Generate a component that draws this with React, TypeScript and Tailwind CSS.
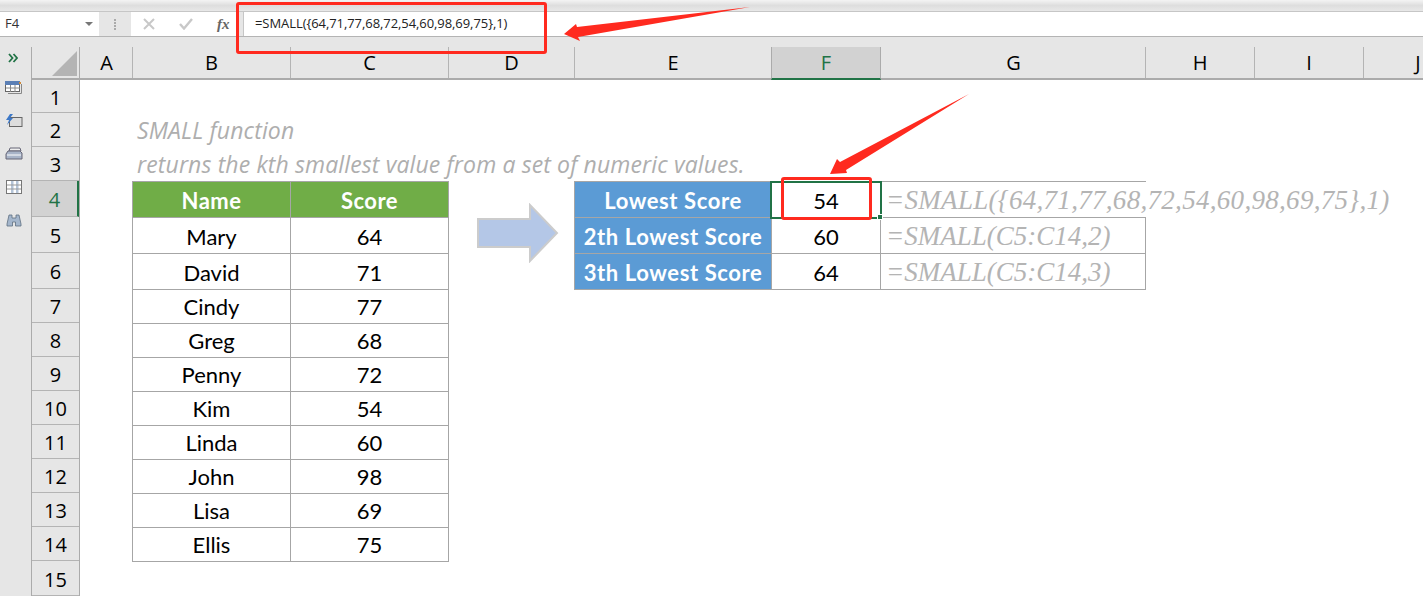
const font = "font-['Lato','Liberation_Sans',sans-serif]";

function SideIcon({ children }: { children: React.ReactNode }) {
  return <div className="w-[24px] h-[24px] flex items-center justify-center">{children}</div>;
}

const columns: [string, number][] = [
  ["A", 52], ["B", 158], ["C", 158], ["D", 126], ["E", 197], ["F", 110], ["G", 264], ["H", 109], ["I", 109], ["J", 109],
];
const rowHeights = [33, 34, 34, 36, 36, 36, 34, 34, 34, 34, 34, 34, 34, 34, 35];
const people: [string, string][] = [
  ["Mary", "64"], ["David", "71"], ["Cindy", "77"], ["Greg", "68"], ["Penny", "72"],
  ["Kim", "54"], ["Linda", "60"], ["John", "98"], ["Lisa", "69"], ["Ellis", "75"],
];
const results: [string, string, string, string][] = [
  ["Lowest Score", "54", "=SMALL({64,71,77,68,72,54,60,98,69,75},1)", "tracking-[0.3px]"],
  ["2th Lowest Score", "60", "=SMALL(C5:C14,2)", "border-r"],
  ["3th Lowest Score", "64", "=SMALL(C5:C14,3)", "border-r"],
];

export default function App() {
  return (
    <div className={`relative w-[1423px] h-[596px] overflow-hidden bg-white ${font}`}>
      <div className="h-[12px] bg-gradient-to-b from-[#f4f4f4] via-[#dedede] to-[#e8e8e8] border-b border-[#c6c6c6]" />
      <div className="h-[25px] bg-[#e6e6e6] flex items-stretch border-b border-[#b4b4b4]">
        <div className="w-[99px] bg-white flex items-center justify-between pl-[5px] pr-[6px] text-[13px] text-[#333] font-['Open_Sans',sans-serif]">
          <span>F4</span>
          <span className="w-0 h-0 border-x-[4px] border-x-transparent border-t-[4px] border-t-[#777]" />
        </div>
        <div className="w-[32px] flex items-center justify-center">
          <div className="flex flex-col gap-[1px]">
            <span className="w-[2px] h-[2px] bg-[#aaa]" /><span className="w-[2px] h-[2px] bg-[#aaa]" /><span className="w-[2px] h-[2px] bg-[#aaa]" /><span className="w-[2px] h-[2px] bg-[#aaa]" />
          </div>
        </div>
        <div className="w-[108px] bg-white flex items-center">
          <svg width="12" height="12" viewBox="0 0 12 12" className="ml-[12px]"><path d="M1 1 L11 11 M11 1 L1 11" stroke="#c8c8c8" strokeWidth="2" /></svg>
          <svg width="14" height="12" viewBox="0 0 14 12" className="ml-[24px]"><path d="M1 6 L5 10.5 L13 1" stroke="#c8c8c8" strokeWidth="2.4" fill="none" /></svg>
          <span className="ml-[24px] text-[15px] leading-none italic font-bold text-[#666] font-['Liberation_Serif',serif]">fx</span>
        </div>
        <div className="w-[4px]" />
        <div className="flex-1 bg-white border-l border-[#c6c6c6] flex items-center pl-[11px] text-[13px] tracking-[-0.07px] text-[#222] font-['Open_Sans',sans-serif]">
          =SMALL({"{"}64,71,77,68,72,54,60,98,69,75{"}"},1)
        </div>
      </div>

      <div className="flex h-[559px]">
        <div className="w-[31px] bg-[#e6e6e6] flex flex-col items-center">
          <div className="h-[42px] pt-[16px] mr-[5px]">
            <svg width="10" height="10" viewBox="0 0 10 10"><path d="M1 1 L4.5 5 L1 9 M5.5 1 L9 5 L5.5 9" stroke="#217346" strokeWidth="1.8" fill="none" /></svg>
          </div>
          <div className="flex flex-col gap-[9px] mt-[-3px] mr-[3px]">
            <SideIcon>
              <svg width="18" height="14" viewBox="0 0 18 14"><rect x="0.5" y="0.5" width="14" height="10" fill="#fff" stroke="#666" /><rect x="0" y="0" width="15" height="4" fill="#5b7fb5" /><rect x="14" y="1" width="2" height="2" fill="#d08a3a" /><path d="M1 7h14M5.5 4v7M10 4v7" stroke="#888" /><path d="M16.5 3v9.5H3" stroke="#888" fill="none" /></svg>
            </SideIcon>
            <SideIcon>
              <svg width="18" height="14" viewBox="0 0 18 14"><rect x="4.5" y="3.5" width="12.5" height="9" fill="#ddd" stroke="#666" /><path d="M5 0 L1 6 L4 6 L2 11 L8 4 L5 4 L8 0 Z" fill="#3c78c8" /></svg>
            </SideIcon>
            <SideIcon>
              <svg width="18" height="14" viewBox="0 0 18 14"><path d="M5 1 H15 L16 4 H4 Z" fill="#eee" stroke="#667" /><path d="M3 4 H15 L17 6 V12 H1 V7 Z" fill="#a8b4c8" stroke="#667" /><path d="M2 8h14" stroke="#fff" /></svg>
            </SideIcon>
            <SideIcon>
              <svg width="16" height="14" viewBox="0 0 16 14"><rect x="0.5" y="0.5" width="15" height="13" fill="#fff" stroke="#777" /><rect x="5" y="1" width="2.5" height="12" fill="#b4c4d8" /><rect x="10" y="1" width="2.5" height="12" fill="#b4c4d8" /><path d="M1 5h14M1 9h14" stroke="#999" /></svg>
            </SideIcon>
            <SideIcon>
              <svg width="16" height="13" viewBox="0 0 16 13"><path d="M3 1 H6 V4 H10 V1 H13 L15 10 V12 H9.5 V8 H6.5 V12 H1 V10 Z" fill="#a4b6cc" stroke="#5e6e80" strokeWidth="0.8" /></svg>
            </SideIcon>
          </div>
        </div>

        <div className="flex-1 min-w-0 flex flex-col">
          <div className="relative flex h-[43px] bg-[#e6e6e6] border-b-2 border-[#ababab] shrink-0 font-['Open_Sans',sans-serif]">
            <div className="w-[49px] shrink-0 relative flex items-end justify-end pb-[2px] pr-[3px]">
              <span className="absolute left-0 bottom-0 w-px h-[31px] bg-[#ababab]" />
              <span className="absolute right-0 bottom-0 w-px h-[31px] bg-[#ababab]" />
              <div className="w-0 h-0 border-l-[25px] border-l-transparent border-b-[25px] border-b-[#b4b4b4]" />
            </div>
            {columns.map(([name, w]) => (
              <div
                key={name}
                style={{ width: w }}
                className={
                  name === "F"
                    ? "shrink-0 self-end h-[33px] mb-[-2px] bg-[#d2d2d2] border-x border-x-[#ababab] border-b-2 border-b-[#217346] flex items-center justify-center pt-[1px] text-[20px] text-[#217346]"
                    : "shrink-0 relative flex items-end justify-center pl-[1px] text-[20px] leading-[31px] text-black"
                }
              >
                {name}
                {name !== "F" && name !== "E" && name !== "J" && <span className="absolute right-[-1px] bottom-0 w-px h-[31px] bg-[#b4b4b4]" />}
              </div>
            ))}
          </div>

          <div className="flex flex-1 min-h-0">
            <div className="w-[49px] shrink-0 bg-[#e6e6e6] border-l border-r border-[#ababab] font-['Open_Sans',sans-serif]">
              {rowHeights.map((h, i) => (
                <div
                  key={i}
                  style={{ height: h }}
                  className={
                    i === 3
                      ? "bg-[#d2d2d2] border-b border-b-[#b4b4b4] border-r-2 border-r-[#217346] flex items-center justify-center pt-[3px] text-[20px] text-[#217346]"
                      : "border-b border-[#b4b4b4] flex items-center justify-center pt-[3px] text-[20px] text-black"
                  }
                >
                  {i + 1}
                </div>
              ))}
            </div>

            <div className="relative flex-1 min-w-0 pl-[52px] pt-[33px]">
              <div className="h-[34px] flex items-center text-[23px] tracking-[0.13px] italic text-[#aeaeae] whitespace-nowrap pl-[5px] pt-[1px] font-['Open_Sans',sans-serif]">SMALL function</div>
              <div className="h-[34px] flex items-center text-[23px] tracking-[0.13px] italic text-[#aeaeae] whitespace-nowrap pl-[5px] pt-[1px] font-['Open_Sans',sans-serif]">returns the kth smallest value from a set of numeric values.</div>

              <div className="flex items-start">
                <div className="w-[317px] shrink-0 border border-[#a6a6a6]">
                  <div className="flex h-[36px] bg-[#70ad47] border-b border-[#a6a6a6] text-white font-bold text-[22px] tracking-[0.5px]">
                    <div className="w-[158px] flex items-center justify-center border-r border-[#a6a6a6] pt-[2px]">Name</div>
                    <div className="flex-1 flex items-center justify-center pt-[2px]">Score</div>
                  </div>
                  {people.map(([n, s], i) => (
                    <div key={n} style={{ height: i < 2 ? 36 : i === 9 ? 33 : 34 }} className="flex border-b last:border-b-0 border-[#a6a6a6] text-[22px] text-black">
                      <div className={i < 2 ? "w-[158px] flex items-center justify-center border-r border-[#a6a6a6] pt-[2px]" : "w-[158px] flex items-center justify-center border-r border-[#a6a6a6]"}>{n}</div>
                      <div className={i < 2 ? "flex-1 flex items-center justify-center pt-[2px]" : "flex-1 flex items-center justify-center"}>{s}</div>
                    </div>
                  ))}
                </div>

                <div className="w-[125px] shrink-0 pt-[22px] pl-[28px]">
                  <svg width="84" height="60" viewBox="0 0 84 60">
                    <path d="M1 16 H53 V2 L80 30 L53 58 V44 H1 Z" fill="#b4c7e7" stroke="#cccccc" strokeWidth="2" />
                  </svg>
                </div>

                <div className="w-[572px] shrink-0 border-t border-[#a6a6a6]">
                  {results.map(([label, value, formula, extra]) => (
                    <div key={label} className="flex h-[36px] text-[22px]">
                      <div className="w-[198px] shrink-0 bg-[#5b9bd5] border-x border-b border-[#a6a6a6] flex items-center justify-center text-white font-bold tracking-[0.6px] pt-[1px]">{label}</div>
                      <div className="w-[109px] shrink-0 border-b border-r border-[#a6a6a6] flex items-center justify-center text-black pt-[1px]">{value}</div>
                      <div className={`w-[265px] shrink-0 border-b border-[#a6a6a6] flex items-center pl-[5px] pt-[1px] whitespace-nowrap text-[27px] italic text-[#b4b4b4] font-['Liberation_Serif',serif] ${extra}`}>{formula}</div>
                    </div>
                  ))}
                </div>
              </div>

              <div className="absolute left-[690px] top-[101px] w-[112px] h-[38px] border-2 border-[#217346]" />
              <div className="absolute left-[797px] top-[134px] w-[6px] h-[6px] bg-[#217346] border border-white" />
              <div className="absolute left-[701px] top-[97px] w-[91px] h-[43px] border-[3px] border-[#ff2a1f] rounded-[3px]" />
            </div>
          </div>
        </div>
      </div>

      <div className="absolute left-[236px] top-[2px] w-[311px] h-[52px] border-[3px] border-[#ff2a1f] rounded-[3px]" />
      <svg className="absolute left-0 top-0 pointer-events-none" width="1423" height="596" viewBox="0 0 1423 596">
        <path d="M750 7 L577 27 L576 24 L564 34 L580 41 L578 37 Z" fill="#ff2a1f" />
        <path d="M969 94 L840 162 L837 159 L830 174 L847 173 L846 170 Z" fill="#ff2a1f" />
      </svg>
    </div>
  );
}
